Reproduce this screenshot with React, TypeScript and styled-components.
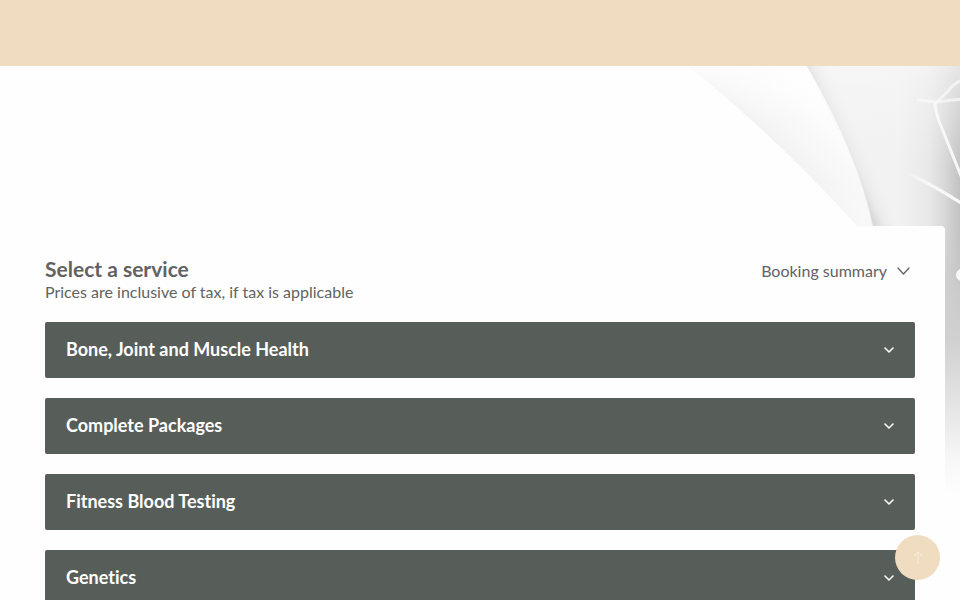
import React from "react";
import styled, { createGlobalStyle } from "styled-components";

const GlobalStyle = createGlobalStyle`
  *, *::before, *::after { box-sizing: border-box; }
  body {
    margin: 0;
    background: #fefefe;
    color: #626262;
    font-family: Lato, "Open Sans", sans-serif;
    font-size: 16px;
    font-variant-ligatures: none;
  }
  h1, h2, p { margin: 0; }
  button { font: inherit; font-variant-ligatures: none; cursor: pointer; border: 0; }
`;

const Page = styled.div`
  position: relative;
  height: 100vh;
  overflow: auto;
  scrollbar-width: none;
`;

const TopBar = styled.header`
  height: 66px;
  background: #f0dcc0;
`;

const Hero = styled.main`
  position: relative;
  padding: 160px 15px 40px;
`;

const Backdrop = styled.svg`
  position: absolute;
  top: 0;
  right: 0;
  width: 300px;
  height: 450px;
`;

const Panel = styled.section`
  position: relative;
  padding: 31px 30px 30px;
  border-radius: 4px;
  background: #fefefe;
`;

const PanelHeader = styled.div`
  display: flex;
  justify-content: space-between;
  align-items: flex-start;
  margin-bottom: 19px;
`;

const Title = styled.h1`
  font-size: 21px;
  line-height: 24px;
  font-weight: 700;
`;

const Note = styled.p`
  line-height: 22px;
`;

const SummaryButton = styled.button`
  display: flex;
  align-items: center;
  gap: 10px;
  padding: 2px 5px;
  background: none;
  color: #626262;
  line-height: 24px;
`;

const ServiceList = styled.div`
  display: grid;
  gap: 20px;
`;

const ServiceButton = styled.button`
  display: flex;
  align-items: center;
  justify-content: space-between;
  width: 100%;
  padding: 16px 21px 17px;
  border-radius: 2px;
  background: #575e59;
  color: #fff;
  font-size: 18px;
  line-height: 23px;
  font-weight: 700;
  text-align: left;
`;

const ScrollTop = styled.button`
  position: fixed;
  right: 20px;
  bottom: 20px;
  display: grid;
  place-items: center;
  width: 45px;
  height: 45px;
  padding: 0;
  border-radius: 50%;
  background: #f0dcc0;
  color: #f8eee0;
`;

const services = [
  "Bone, Joint and Muscle Health",
  "Complete Packages",
  "Fitness Blood Testing",
  "Genetics",
];

function Chevron({ width, height, stroke }: { width: number; height: number; stroke: number }) {
  return (
    <svg width={width} height={height} viewBox={`0 0 ${width} ${height}`} fill="none" aria-hidden="true">
      <path
        d={`M1 1 L${width / 2} ${height - 1} L${width - 1} 1`}
        stroke="currentColor"
        strokeWidth={stroke}
        strokeLinecap="round"
        strokeLinejoin="round"
      />
    </svg>
  );
}

function Artwork() {
  return (
    <Backdrop viewBox="0 0 300 450" aria-hidden="true">
      <defs>
        <linearGradient id="fold" gradientUnits="userSpaceOnUse" x1="96" y1="88" x2="152" y2="32">
          <stop offset="0" stopColor="#ededed" />
          <stop offset="0.45" stopColor="#f6f6f6" />
          <stop offset="1" stopColor="#fdfdfd" />
        </linearGradient>
        <linearGradient id="foldFade" x1="0" y1="0" x2="0" y2="1">
          <stop offset="0" stopColor="#fefefe" stopOpacity="0.75" />
          <stop offset="0.35" stopColor="#fefefe" stopOpacity="0" />
          <stop offset="0.7" stopColor="#fefefe" stopOpacity="0" />
          <stop offset="1" stopColor="#fefefe" stopOpacity="0.45" />
        </linearGradient>
        <linearGradient id="sheet" gradientUnits="userSpaceOnUse" x1="145" y1="0" x2="300" y2="0">
          <stop offset="0" stopColor="#f3f3f3" />
          <stop offset="0.6" stopColor="#f2f2f2" />
          <stop offset="0.8" stopColor="#e8e8e8" />
          <stop offset="0.9" stopColor="#d8d8d8" />
          <stop offset="1" stopColor="#c2c2c2" />
        </linearGradient>
        <linearGradient id="sheetTop" x1="0" y1="0" x2="0" y2="1">
          <stop offset="0" stopColor="#f8f8f8" stopOpacity="0.65" />
          <stop offset="1" stopColor="#f3f3f3" stopOpacity="0" />
        </linearGradient>
        <linearGradient id="edge" gradientUnits="userSpaceOnUse" x1="184" y1="88" x2="206" y2="78">
          <stop offset="0" stopColor="#cfcfcf" stopOpacity="0.7" />
          <stop offset="0.3" stopColor="#dedede" stopOpacity="0.4" />
          <stop offset="1" stopColor="#f3f3f3" stopOpacity="0" />
        </linearGradient>
        <linearGradient id="side" gradientUnits="userSpaceOnUse" x1="0" y1="160" x2="0" y2="430">
          <stop offset="0" stopColor="#c8c8c8" stopOpacity="0" />
          <stop offset="0.25" stopColor="#cdcdcd" stopOpacity="0.8" />
          <stop offset="0.42" stopColor="#d0d0d0" />
          <stop offset="0.65" stopColor="#e3e3e3" />
          <stop offset="0.88" stopColor="#f8f8f8" />
          <stop offset="1" stopColor="#fefefe" />
        </linearGradient>
        <linearGradient id="ray" gradientUnits="userSpaceOnUse" x1="245" y1="0" x2="300" y2="0">
          <stop offset="0" stopColor="#fff" stopOpacity="0" />
          <stop offset="0.45" stopColor="#fafafa" stopOpacity="0.9" />
          <stop offset="1" stopColor="#fafafa" />
        </linearGradient>
      </defs>
      <path d="M28 0 H147 Q199 90 212 160 H197 Q120 74 28 0 Z" fill="url(#fold)" />
      <path d="M24 0 H147 Q199 90 212 162 H195 Q120 74 24 0 Z" fill="url(#foldFade)" />
      <path d="M147 0 H300 V430 H285 V166 H213 Q199 90 147 0 Z" fill="url(#sheet)" />
      <path d="M147 0 H300 V100 H194 Z" fill="url(#sheetTop)" />
      <path d="M147 0 Q199 90 213 160 H236 Q222 84 166 0 Z" fill="url(#edge)" />
      <path d="M285 160 H300 V431 H285 Z" fill="url(#side)" />
      <g fill="none" stroke="#f8f8f8" strokeLinecap="round">
        <path d="M302 14 Q293 18 288 25 L277 36" strokeWidth="3" opacity="0.75" />
        <path d="M302 33 L276 36 L258 34" strokeWidth="3" opacity="0.75" />
        <path d="M275 37 Q276 49 281 60 L301 110" strokeWidth="3" />
      </g>
      <path d="M246 107 Q268 116 301 137" fill="none" stroke="url(#ray)" strokeWidth="3" />
      <circle cx="302" cy="209" r="6" fill="#f8f8f8" />
    </Backdrop>
  );
}

export default function App() {
  return (
    <Page>
      <GlobalStyle />
      <TopBar />
      <Hero>
        <Artwork />
        <Panel>
          <PanelHeader>
            <div>
              <Title>Select a service</Title>
              <Note>Prices are inclusive of tax, if tax is applicable</Note>
            </div>
            <SummaryButton type="button" aria-expanded={false}>
              Booking summary
              <Chevron width={13} height={8} stroke={1.3} />
            </SummaryButton>
          </PanelHeader>
          <ServiceList>
            {services.map((name) => (
              <ServiceButton key={name} type="button" aria-expanded={false}>
                {name}
                <Chevron width={10} height={6} stroke={1.6} />
              </ServiceButton>
            ))}
          </ServiceList>
        </Panel>
      </Hero>
      <ScrollTop type="button" aria-label="Back to top">
        <svg width="12" height="14" viewBox="0 0 12 14" fill="none" stroke="currentColor" aria-hidden="true">
          <path d="M6 13 V1 M2 5 L6 1 L10 5" strokeWidth="1" />
        </svg>
      </ScrollTop>
    </Page>
  );
}
